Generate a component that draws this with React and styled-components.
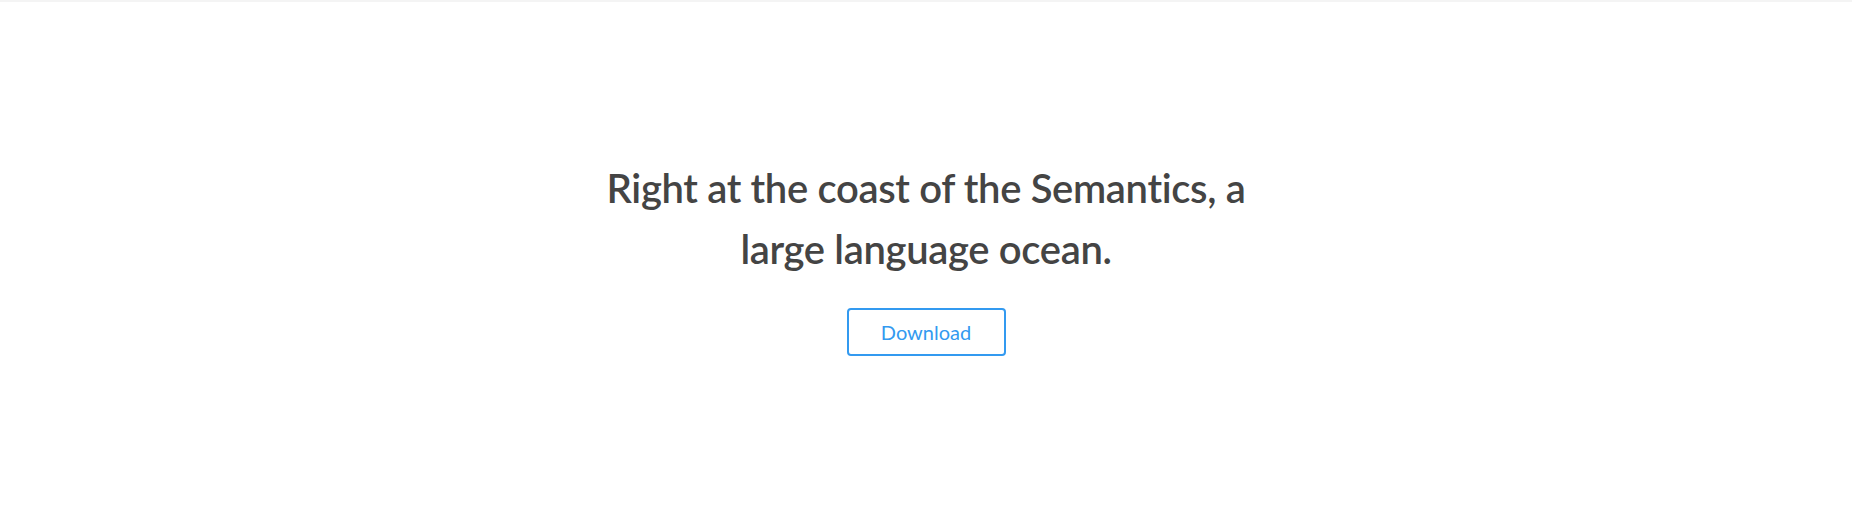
import React from "react"
import styled, { createGlobalStyle } from "styled-components"

const GlobalStyle = createGlobalStyle`
  html, body {
    margin: 0;
    padding: 0;
    background: #ffffff;
    font-family: Lato, "Open Sans", sans-serif;
  }
`

const Page = styled.div`
  display: flex;
  flex-direction: column;
  height: 524px;
  width: 100%;
  border-top: 2px solid #f4f4f4;
  box-sizing: border-box;
`

const Hero = styled.section`
  flex: 1;
  display: flex;
  flex-direction: column;
  align-items: center;
  justify-content: center;
  padding-bottom: 12px;
`

const Title = styled.h1`
  margin: 0;
  max-width: 680px;
  text-align: center;
  font-family: Lato, sans-serif;
  font-weight: 600;
  font-size: 40px;
  line-height: 61px;
  letter-spacing: -0.35px;
  font-variant-ligatures: none;
  color: #444444;
`

const Button = styled.button`
  margin-top: 28px;
  width: 159px;
  height: 48px;
  background: #ffffff;
  border: 2px solid #339af0;
  border-radius: 4px;
  color: #339af0;
  font-family: Lato, sans-serif;
  font-size: 20px;
  cursor: pointer;
`

const App = () => (
  <>
    <GlobalStyle />
    <Page>
      <Hero>
        <Title>Right at the coast of the Semantics, a large language ocean.</Title>
        <Button>Download</Button>
      </Hero>
    </Page>
  </>
)

export default App
